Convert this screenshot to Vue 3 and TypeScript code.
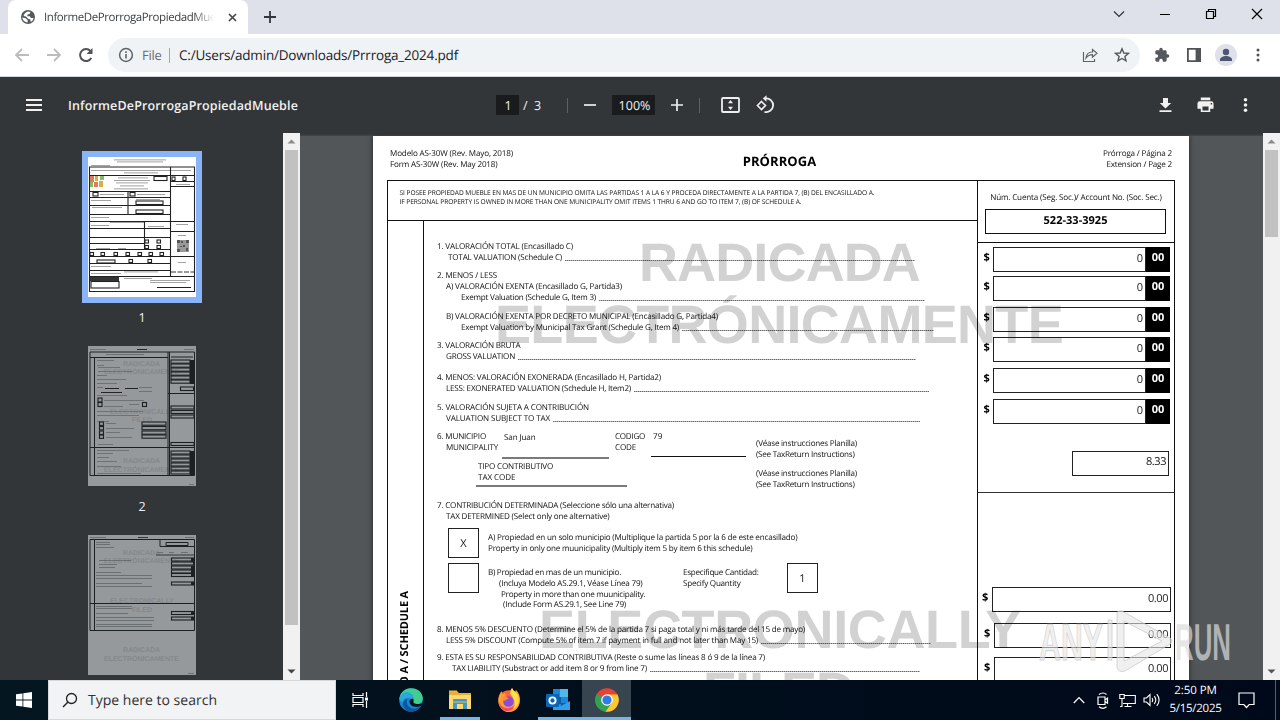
<script setup lang="ts">
interface Line { text: string; indent: number; width: number; leader?: number }
interface Mark { x: number; y: number; w: number; h?: number }

// Adjusts letter spacing so that a run of text fills the given width.
const vFit = {
  mounted(el: HTMLElement, binding: { value: number }) {
    const count = (el.textContent ?? '').trim().length
    const natural = el.getBoundingClientRect().width
    if (count > 0 && binding.value > 0) {
      el.style.letterSpacing = `${((binding.value - natural) / count).toFixed(3)}px`
    }
  },
}

const groups: { id: string; lines: Line[] }[] = [
  { id: 'i1', lines: [
    { text: '1. VALORACIÓN TOTAL (Encasillado C)', indent: 0, width: 136 },
    { text: 'TOTAL VALUATION (Schedule C)', indent: 11, width: 114, leader: 478 }] },
  { id: 'i2', lines: [
    { text: '2. MENOS / LESS', indent: 0, width: 60 },
    { text: 'A) VALORACIÓN EXENTA (Encasillado G, Partida3)', indent: 9, width: 176 },
    { text: 'Exempt Valuation (Schedule G, Item 3)', indent: 24, width: 135, leader: 488 }] },
  { id: 'i2b', lines: [
    { text: 'B) VALORACIÓN EXENTA POR DECRETO MUNICIPAL (Encasillado G, Partida4)', indent: 9, width: 272 },
    { text: 'Exempt Valuation by Municipal Tax Grant (Schedule G, Item 4)', indent: 24, width: 218, leader: 497 }] },
  { id: 'i3', lines: [
    { text: '3. VALORACIÓN BRUTA', indent: 0, width: 83.5 },
    { text: 'GROSS VALUATION', indent: 9, width: 69, leader: 479 }] },
  { id: 'i4', lines: [
    { text: '4. MENOS: VALORACIÓN EXONERADA (Encasillado H, Partida2)', indent: 0, width: 224 },
    { text: 'LESS: EXONERATED VALUATION (Schedule H, Item2)', indent: 9, width: 185, leader: 492 }] },
  { id: 'i5', lines: [
    { text: '5. VALORACIÓN SUJETA A CONTRIBUCIÓN', indent: 0, width: 152 },
    { text: 'VALUATION SUBJECT TO TAX', indent: 9, width: 104, leader: 483 }] },
]

const tail: { id: string; lines: Line[] }[] = [
  { id: 'i8', lines: [
    { text: '8. MENOS 5% DESCUENTO (Determine el 5% de la partida 7 si paga total y ni más tarde del 15 de mayo)', indent: 0, width: 368 },
    { text: 'LESS 5% DISCOUNT (Compute 5% of item 7 if payment in full and not later than May 15)', indent: 9, width: 312, leader: 494 }] },
  { id: 'i9', lines: [
    { text: '9. ESTA ES SU RESPONSABILIDAD CONTRIBUTIVA (Reste o sume las líneas 8 ó 9 de la línea 7)', indent: 0, width: 328 },
    { text: 'TAX LIABILITY (Substract or add item 8 or 9 from line 7)', indent: 15, width: 195, leader: 483 }] },
]

const amounts = ['0', '0', '0', '0', '0', '0']
const totals = ['0.00', '0.00', '0.00']

const p1Rules: Mark[] = [
  { x: 2, y: 18, w: 104 }, { x: 2, y: 34, w: 80 }, { x: 2, y: 40, w: 80 }, { x: 2, y: 48, w: 80 },
  { x: 2, y: 57, w: 80 }, { x: 2, y: 64, w: 104 }, { x: 2, y: 71, w: 80 }, { x: 2, y: 80, w: 80 },
  { x: 2, y: 86, w: 54 }, { x: 2, y: 92, w: 80 }, { x: 2, y: 99, w: 104 }, { x: 2, y: 106, w: 80 },
  { x: 2, y: 113, w: 80 }, { x: 2, y: 119, w: 104 }, { x: 82, y: 24, w: 24 }, { x: 82, y: 29, w: 24 },
  { x: 82, y: 74, w: 24 }, { x: 69, y: 130, w: 34 },
]
const p1Boxes: Mark[] = [
  { x: 5, y: 35.5, w: 5, h: 3.5 }, { x: 42, y: 35.5, w: 5, h: 3.5 }, { x: 66, y: 19.5, w: 13, h: 4 },
  { x: 84, y: 20, w: 3, h: 3.5 }, { x: 95, y: 20, w: 3, h: 3.5 }, { x: 48, y: 44, w: 27, h: 3.5 },
  { x: 48, y: 53, w: 27, h: 3.5 }, { x: 57, y: 83, w: 3.5, h: 3 }, { x: 69, y: 83, w: 3.5, h: 3 },
  { x: 57, y: 88.5, w: 3.5, h: 3 }, { x: 69, y: 88.5, w: 3.5, h: 3 }, { x: 2, y: 95.5, w: 3.5, h: 3 },
  { x: 13, y: 95.5, w: 3.5, h: 3 }, { x: 26, y: 95.5, w: 3.5, h: 3 }, { x: 38, y: 95.5, w: 3.5, h: 3 },
  { x: 50, y: 95.5, w: 3.5, h: 3 }, { x: 61, y: 95.5, w: 3.5, h: 3 }, { x: 72, y: 95.5, w: 3.5, h: 3 },
  { x: 9, y: 103, w: 18, h: 3 }, { x: 41, y: 102.5, w: 3.5, h: 3 }, { x: 60, y: 102.5, w: 3.5, h: 3 },
  { x: 3, y: 124.5, w: 28, h: 6.5 },
]
const p1Faint: Mark[] = [
  { x: 26, y: 2.5, w: 52 }, { x: 29, y: 4.5, w: 46 }, { x: 3, y: 8, w: 19 },
  { x: 3, y: 13, w: 100 }, { x: 36, y: 15.5, w: 34 },
  { x: 30, y: 20.5, w: 30 }, { x: 26, y: 23, w: 36 }, { x: 28, y: 25.5, w: 32 }, { x: 32, y: 28.5, w: 24 },
  { x: 26, y: 31.5, w: 34 }, { x: 12, y: 37, w: 24 }, { x: 49, y: 37, w: 28 }, { x: 3, y: 43, w: 20 },
  { x: 4, y: 50, w: 30 }, { x: 48, y: 42, w: 24 }, { x: 3, y: 60, w: 18 }, { x: 22, y: 65, w: 34 },
  { x: 3, y: 68, w: 18 }, { x: 60, y: 69, w: 16 }, { x: 88, y: 27, w: 14 }, { x: 88, y: 67, w: 12 },
  { x: 90, y: 78, w: 8 }, { x: 8, y: 91, w: 14 }, { x: 30, y: 91, w: 8 }, { x: 36, y: 114.5, w: 34 },
  { x: 62, y: 123, w: 40 }, { x: 62, y: 125, w: 36 }, { x: 90, y: 105, w: 8 }, { x: 3, y: 109, w: 20 },
  { x: 3, y: 116, w: 30 }, { x: 36, y: 121, w: 28 },
]
const p2Faint: Mark[] = [
  { x: 2, y: 3, w: 16 }, { x: 96, y: 3, w: 10 }, { x: 18, y: 8, w: 38 }, { x: 9, y: 14, w: 17 }, { x: 9, y: 19, w: 7 },
  { x: 10, y: 21, w: 22 }, { x: 10, y: 25, w: 34 }, { x: 9, y: 29, w: 10 }, { x: 9, y: 33, w: 29 }, { x: 9, y: 37, w: 20 },
  { x: 9, y: 41, w: 6 }, { x: 51, y: 41, w: 13 }, { x: 51, y: 45, w: 13 }, { x: 9, y: 49, w: 30 }, { x: 16, y: 54, w: 40 },
  { x: 16, y: 60, w: 19 }, { x: 41, y: 58, w: 10 }, { x: 9, y: 65, w: 46 }, { x: 9, y: 69, w: 42 }, { x: 9, y: 75, w: 12 },
  { x: 18, y: 77, w: 10 }, { x: 18, y: 82, w: 28 }, { x: 18, y: 86, w: 14 }, { x: 18, y: 91, w: 26 }, { x: 10, y: 98, w: 15 },
  { x: 9, y: 104, w: 32 }, { x: 9, y: 107, w: 16 }, { x: 9, y: 111, w: 12 }, { x: 9, y: 115, w: 20 }, { x: 9, y: 120, w: 24 },
  { x: 9, y: 127, w: 44 }, { x: 101, y: 138, w: 5 },
]
const p2Boxes: Mark[] = [
  ...[14, 18, 22, 26, 30, 34].map((y) => ({ x: 83, y, w: 19, h: 3.2 })),
  { x: 92.5, y: 41, w: 13, h: 3.5 }, { x: 83, y: 60, w: 23, h: 3 }, { x: 83, y: 64.5, w: 23, h: 3 },
  { x: 83, y: 69, w: 23, h: 3 }, { x: 83, y: 96.5, w: 23, h: 3 },
  ...[105, 109, 113, 117, 121, 125].map((y) => ({ x: 83, y, w: 19, h: 3 })),
  ...[76, 80.5, 85, 89].map((y) => ({ x: 54, y, w: 24, h: 3.2 })),
  ...[76, 80.5, 85, 89].map((y) => ({ x: 11.5, y, w: 4, h: 3.4 })),
  { x: 10, y: 52, w: 4, h: 4 }, { x: 10, y: 56.5, w: 4, h: 4 }, { x: 54.5, y: 56.5, w: 4, h: 4 },
]
const p3Faint: Mark[] = [
  { x: 2, y: 2, w: 16 }, { x: 97, y: 2, w: 9 }, { x: 8, y: 7, w: 14 }, { x: 8, y: 9, w: 14 }, { x: 8, y: 12, w: 18 },
  { x: 69, y: 17, w: 6 }, { x: 81, y: 17, w: 5 }, { x: 93, y: 17, w: 7 }, { x: 11, y: 25, w: 32 }, { x: 11, y: 29, w: 18 },
  { x: 11, y: 32, w: 16 }, { x: 8, y: 37, w: 25 }, { x: 8, y: 40, w: 56 }, { x: 8, y: 43, w: 56 }, { x: 8, y: 48, w: 46 },
  { x: 8, y: 51, w: 56 }, { x: 8, y: 71, w: 36 }, { x: 8, y: 73, w: 36 }, { x: 8, y: 78, w: 32 }, { x: 8, y: 82, w: 58 },
  { x: 8, y: 85, w: 58 }, { x: 8, y: 89, w: 56 }, { x: 8, y: 91, w: 56 }, { x: 100, y: 138, w: 6 },
]
const p3Boxes: Mark[] = [23, 27, 31, 35, 38.5, 47, 76.5, 82].map((y) => ({ x: 83.5, y, w: 22, h: 3 }))
</script>

<template>
  <div class="screen">
    <header class="tabs">
      <div class="tab">
        <svg class="globe" viewBox="0 0 14 14"><circle cx="7" cy="7" r="7" fill="#55595e" /><path d="M1.300 7.500 4.500 8.300 6.600 10v2.400C4 12.300 1.600 10.200 1.300 7.500zM7 1.500 9.500 1.900 8.600 4 6.500 4.600 6.300 6.300 8.800 6.200 10 8h2.600c-.4 2-1.400 3.200-2.800 4L9.300 9.500 7 8.700 5 6.500l-2.500-.6C3.200 3.500 5 2 7 1.500z" fill="#fff" /></svg>
        <span class="tab-title"><span v-fit="187">InformeDeProrrogaPropiedadMueble</span></span>
        <svg class="tab-x" viewBox="0 0 9 9"><path d="m1 1 7 7M8 1 1 8" stroke="#45494d" stroke-width="1.700" /></svg>
      </div>
      <svg class="new-tab" viewBox="0 0 12 12"><path d="M6 0v12M0 6h12" stroke="#33373b" stroke-width="1.800" /></svg>
      <div class="window-buttons">
        <svg viewBox="0 0 12 12"><path d="m1 3.500 5 5 5-5" fill="none" stroke="#333" stroke-width="1.200" /></svg>
        <svg viewBox="0 0 12 12"><path d="M1 6.500h10" stroke="#000" /></svg>
        <svg viewBox="0 0 12 12"><path d="M1.500 3.500h7v7h-7zM3.500 3.500v-2h7v7h-2" fill="none" stroke="#000" stroke-width="1.200" /></svg>
        <svg viewBox="0 0 12 12"><path d="m1 1 10 10M11 1 1 11" stroke="#000" stroke-width="1.200" /></svg>
      </div>
    </header>

    <div class="address-row">
      <svg class="nav" viewBox="0 0 16 16"><path d="M15 8H2M8 2 2 8l6 6" fill="none" stroke="#babcbe" stroke-width="1.800" /></svg>
      <svg class="nav" viewBox="0 0 16 16"><path d="M1 8h13M8 2l6 6-6 6" fill="none" stroke="#babcbe" stroke-width="1.800" /></svg>
      <svg class="nav" viewBox="0 0 16 16"><path d="M13.300 11A6 6 0 1 1 12.500 4" fill="none" stroke="#505357" stroke-width="2" /><path d="M14.500 1v6H8.500z" fill="#505357" /></svg>
      <div class="omnibox">
        <svg class="info" viewBox="0 0 16 16"><circle cx="8" cy="8" r="6.400" fill="none" stroke="#5f6368" stroke-width="1.500" /><path d="M8 7v4.500M8 4.300v1.600" stroke="#5f6368" stroke-width="1.600" /></svg>
        <span class="scheme"><span v-fit="19.500">File</span></span>
        <i class="omni-sep"></i>
        <span class="url" v-fit="279">C:/Users/admin/Downloads/Prrroga_2024.pdf</span>
        <svg class="share" viewBox="0 0 16 16"><path d="M1.500 5v9.500h11V12M4 11c.4-4 2.500-6 6.500-6V2.500L15 6.300l-4.500 3.900V7.600C7.800 7.600 5.800 8.500 4 11z" fill="none" stroke="#5f6368" stroke-width="1.200" /></svg>
        <svg class="star" viewBox="0 0 16 16"><path d="m8 1.800 1.800 4.200 4.600.4-3.500 3 1.100 4.500L8 11.500l-4 2.400 1.100-4.500-3.500-3 4.600-.4z" fill="none" stroke="#55595e" stroke-width="1.400" /></svg>
      </div>
      <svg class="puzzle" viewBox="0 0 24 24"><path fill="#55595e" d="M20.500 11H19V7c0-1.100-.9-2-2-2h-4V3.500a2.500 2.500 0 0 0-5 0V5H4c-1.100 0-2 .9-2 2v3.800h1.500a2.700 2.700 0 0 1 0 5.400H2V20c0 1.100.9 2 2 2h3.800v-1.500a2.700 2.700 0 0 1 5.400 0V22H17c1.100 0 2-.9 2-2v-4h1.500a2.500 2.500 0 0 0 0-5z" /></svg>
      <svg class="panel" viewBox="0 0 14 14"><path fill="#505357" fill-rule="evenodd" d="M0 0h14v14H0zM1.800 1.800v10.400h6.800V1.800z" /></svg>
      <svg class="avatar" viewBox="0 0 22 22"><circle cx="11" cy="11" r="11" fill="#dfe0ea" /><circle cx="11" cy="8" r="3.200" fill="#4d5570" /><path d="M5 17v-1.500c0-2.300 3.500-3.500 6-3.500s6 1.200 6 3.500V17z" fill="#4d5570" /></svg>
      <svg class="dots" viewBox="0 0 4 14"><g fill="#505357"><circle cx="2" cy="2" r="1.500" /><circle cx="2" cy="7" r="1.500" /><circle cx="2" cy="12" r="1.500" /></g></svg>
    </div>

    <div class="pdf-bar">
      <svg class="burger" viewBox="0 0 16 12"><path d="M0 1h16M0 6h16M0 11h16" stroke="#f1f1f1" stroke-width="2" /></svg>
      <span class="doc-title"><span v-fit="230">InformeDeProrrogaPropiedadMueble</span></span>
      <span class="page-now">1</span>
      <span class="page-all">/&nbsp; 3</span>
      <i class="bar-sep"></i>
      <svg class="zoom-btn" viewBox="0 0 12 12"><path d="M0 6h12" stroke="#eee" stroke-width="1.700" /></svg>
      <span class="zoom-value"><span v-fit="32">100%</span></span>
      <svg class="zoom-btn" viewBox="0 0 12 12"><path d="M0 6h12M6 0v12" stroke="#eee" stroke-width="1.700" /></svg>
      <i class="bar-sep second"></i>
      <svg class="fit-btn" viewBox="0 0 19 16"><rect x="1" y="1" width="17" height="14" rx="1" fill="none" stroke="#eee" stroke-width="1.800" /><path d="M9.500 3 12 6.300H7zM9.500 13 12 9.700H7z" fill="#eee" /></svg>
      <svg class="rotate-btn" viewBox="0 0 18 18"><path d="M5.500 5.500 9.500 9.500l-4 4-4-4z" fill="none" stroke="#eee" stroke-width="1.600" /><path d="M9.500 2.500a6.800 6.800 0 1 1-1 13.300" fill="none" stroke="#eee" stroke-width="1.800" /><path d="M10.500-.8v6.600L6.800 2.500z" fill="#eee" /></svg>
      <div class="pdf-actions">
        <svg viewBox="0 0 16 16"><path d="M5.500 1h5v5h3.200L8 11.500 2.300 6h3.200zM2 13.200h12V15H2z" fill="#f1f1f1" /></svg>
        <svg viewBox="0 0 18 16"><path fill="#f1f1f1" fill-rule="evenodd" d="M4 0h10v3H4zM3 4h12a2.500 2.500 0 0 1 2.500 2.500V12H14v3.500H4V12H.5V6.500A2.500 2.500 0 0 1 3 4zm2.800 5.500v4.300h6.400V9.500zM14.500 6v1.500H16V6z" /></svg>
        <svg viewBox="0 0 16 16"><g fill="#f1f1f1"><circle cx="8" cy="2.800" r="1.800" /><circle cx="8" cy="8" r="1.800" /><circle cx="8" cy="13.200" r="1.800" /></g></svg>
      </div>
    </div>

    <main class="viewer">
      <aside class="thumbs">
        <div class="thumb selected">
          <svg viewBox="0 0 108 140">
            <rect width="108" height="140" fill="#fff" />
            <g fill="#8c8c8c"><rect v-for="(m, i) in p1Faint" :key="i" :x="m.x" :y="m.y" :width="m.w" height=".8" /></g>
            <g fill="#222"><rect v-for="(m, i) in p1Rules" :key="i" :x="m.x" :y="m.y" :width="m.w" height="1" /></g>
            <g fill="#fff" stroke="#222" stroke-width="1.100"><rect v-for="(m, i) in p1Boxes" :key="i" :x="m.x" :y="m.y" :width="m.w" :height="m.h" /></g>
            <path d="M1.500 10h105v124.500H1.500zM82.500 10v109.500M40 34v23M56.500 64v28" fill="none" stroke="#222" stroke-width="1.100" />
            <path d="M2 19h4v6H2zM6 25h4v5H6z" fill="#dc7d54" /><path d="M7 19h3v5H7zM11 24h4v6h-4z" fill="#d9ad46" /><path d="M2 25h3v5H2zM12 19h4v4h-4z" fill="#86ba68" />
            <rect x="2" y="120" width="29" height="4" fill="#333" />
            <rect x="89" y="83" width="12" height="12" fill="#999" /><path d="M89 83h3v3h-3zM98 83h3v3h-3zM89 92h3v3h-3zM95 88h2v2h-2zM98 91h2v3h-2zM93 84h2v2h-2zM92 89h2v1h-2z" fill="#555" />
            <path d="M83 115h23" stroke="#333" stroke-dasharray="5 1.500" />
          </svg>
        </div>
        <span class="thumb-no">1</span>
        <div class="thumb">
          <svg viewBox="0 0 108 140">
            <rect width="108" height="140" fill="#96999c" />
            <g class="thumb-mark">
              <text x="35" y="19.500" textLength="37">RADICADA</text><text x="16" y="27.500" textLength="75">ELECTRÓNICAMENTE</text>
              <text x="22" y="68" textLength="64">ELECTRONICALLY</text><text x="44" y="76" textLength="20">FILED</text>
              <text x="35" y="117" textLength="37">RADICADA</text><text x="16" y="126" textLength="75">ELECTRÓNICAMENTE</text>
            </g>
            <g fill="#64686b"><rect v-for="(m, i) in p2Faint" :key="i" :x="m.x" :y="m.y" :width="m.w" height=".8" /></g>
            <path d="M49 3.500h10M17 42.500h14M37 42.500h13M13 46.500h21" stroke="#222" />
            <path d="M2 6h104.500v123.500H2zM2 11.500h78M6.500 11.500v118M80 6v123.500M81.500 6v123.500M80 47.500h26.500M2 101.500h104.500M83 11h22" fill="none" stroke="#1d2023" />
            <g fill="none" stroke="#1d2023" stroke-width="1.100"><rect v-for="(m, i) in p2Boxes" :key="i" :x="m.x" :y="m.y" :width="m.w" :height="m.h" /></g>
            <path d="M102 14h4v24h-4zM102 105h4v24h-4z" fill="#1d2023" />
          </svg>
        </div>
        <span class="thumb-no">2</span>
        <div class="thumb">
          <svg viewBox="0 0 108 140">
            <rect width="108" height="140" fill="#96999c" />
            <g class="thumb-mark">
              <text x="35" y="19.500" textLength="37">RADICADA</text><text x="16" y="27.500" textLength="75">ELECTRÓNICAMENTE</text>
              <text x="22" y="68" textLength="64">ELECTRONICALLY</text><text x="44" y="77" textLength="20">FILED</text>
              <text x="35" y="117" textLength="37">RADICADA</text><text x="16" y="126" textLength="75">ELECTRÓNICAMENTE</text>
            </g>
            <g fill="#606467"><rect v-for="(m, i) in p3Faint" :key="i" :x="m.x" :y="m.y" :width="m.w" height=".8" /></g>
            <path d="M50 2.500h10M68 20h38" stroke="#33373a" />
            <path d="M2 4.500h104.500v91H2zM6.500 4.500v91M2 68.500h104.500M72 4.500v7h34M78 7.500h22v3H78z" fill="none" stroke="#1d2023" />
            <g fill="none" stroke="#1d2023" stroke-width="1.100"><rect v-for="(m, i) in p3Boxes" :key="i" :x="m.x" :y="m.y" :width="m.w" :height="m.h" /></g>
            <path d="M103 23h3v4h-3zM103 31h3v11h-3zM103 47h3v3h-3zM103 76.500h3v3h-3zM103 82h3v3h-3z" fill="#1d2023" />
          </svg>
        </div>
      </aside>

      <div class="scrollbar side-scroll">
        <svg viewBox="0 0 17 17"><path d="M4.500 10.500 8.500 6.500l4 4z" fill="#8b8b8b" /></svg>
        <i class="grip"></i>
        <svg class="end" viewBox="0 0 17 17"><path d="M4.500 6.500l4 4 4-4z" fill="#444" /></svg>
      </div>

      <section class="canvas">
        <article class="sheet">
          <div class="sheet-head">
            <div><p><span v-fit="123">Modelo AS-30W (Rev. Mayo, 2018)</span></p><p><span v-fit="107.500">Form AS-30W (Rev. May 2018)</span></p></div>
            <h1><span v-fit="73.500">PRÓRROGA</span></h1>
            <div class="right"><p><span v-fit="69">Prórroga / Página 2</span></p><p><span v-fit="65.500">Extension / Page 2</span></p></div>
          </div>

          <div class="form">
            <div class="form-main">
              <div class="notice">
                <p><span v-fit="475">SI POSEE PROPIEDAD MUEBLE EN MAS DE UN MUNICIPIO OMITA LAS PARTIDAS 1 A LA 6 Y PROCEDA DIRECTAMENTE A LA PARTIDA 7, (B) DEL ENCASILLADO A.</span></p>
                <p><span v-fit="402">IF PERSONAL PROPERTY IS OWNED IN MORE THAN ONE MUNICIPALITY OMIT ITEMS 1 THRU 6 AND GO TO ITEM 7, (B) OF SCHEDULE A.</span></p>
              </div>
              <div class="form-body">
                <div class="spine"><span>ENCASILLADO A / SCHEDULE A</span></div>
                <div class="items">
                  <div v-for="g in groups" :key="g.id">
                    <div v-for="l in g.lines" :key="l.text" class="line" :style="{ paddingLeft: l.indent + 'px', width: (l.leader ?? 520) + 'px' }">
                      <span v-fit="l.width">{{ l.text }}</span><i v-if="l.leader" class="leader"></i>
                    </div>
                  </div>

                  <div class="fields">
                    <div class="f-label"><p><span v-fit="49">6. MUNICIPIO</span></p><p class="sub"><span v-fit="52">MUNICIPALITY</span></p></div>
                    <div class="f-value grey"><span v-fit="31.500">San Juan</span></div>
                    <div class="f-code"><p><span v-fit="30">CODIGO</span></p><p><span v-fit="21">CODE</span></p></div>
                    <div class="f-value number"><span v-fit="9.500">79</span></div>
                    <div class="f-note"><p><span v-fit="101">(Véase instrucciones Planilla)</span></p><p><span v-fit="98.500">(See TaxReturn Instructions)</span></p></div>
                  </div>
                  <div class="fields">
                    <div class="f-tax"><p><span v-fit="75">TIPO CONTRIBUTIVO</span></p><p><span v-fit="37.500">TAX CODE</span></p></div>
                    <div class="f-note lower"><p><span v-fit="101">(Véase instrucciones Planilla)</span></p><p><span v-fit="98.500">(See TaxReturn Instructions)</span></p></div>
                  </div>

                  <div>
                    <p><span v-fit="237">7. CONTRIBUCIÓN DETERMINADA (Seleccione sólo una alternativa)</span></p>
                    <p class="sub"><span v-fit="163.500">TAX DETERMINED (Select only one alternative)</span></p>
                  </div>
                  <div class="choice">
                    <b class="check">X</b>
                    <div class="choice-text">
                      <p><span v-fit="309.500">A) Propiedad en un solo municipio (Multiplique la partida 5 por la 6 de este encasillado)</span></p>
                      <p><span v-fit="264.500">Property in only one muunicipality (Multiply item 5 by item 6 this schedule)</span></p>
                    </div>
                  </div>
                  <div class="choice">
                    <b class="check"></b>
                    <div class="choice-text second">
                      <p><span v-fit="133">B) Propiedad en mas de un municipio.</span></p>
                      <p class="s1"><span v-fit="143.500">(Incluya Modelo AS.29.1, Véase Línea 79)</span></p>
                      <p class="s2"><span v-fit="144.500">Property in more than one muunicipality.</span></p>
                      <p class="s3"><span v-fit="123">(Include Form AS.29.1, See Line 79)</span></p>
                    </div>
                    <div class="quantity"><p><span v-fit="75.500">Especifique Cantidad:</span></p><p><span v-fit="57.500">Specify Quantity</span></p></div>
                    <b class="check">1</b>
                  </div>

                  <div v-for="g in tail" :key="g.id">
                    <div v-for="l in g.lines" :key="l.text" class="line" :style="{ paddingLeft: l.indent + 'px', width: (l.leader ?? 520) + 'px' }">
                      <span v-fit="l.width">{{ l.text }}</span><i v-if="l.leader" class="leader"></i>
                    </div>
                  </div>
                </div>
              </div>
            </div>

            <div class="form-side">
              <div class="account">
                <p><span v-fit="171.500">Núm. Cuenta (Seg. Soc.)/ Account No. (Soc. Sec.)</span></p>
                <div class="account-no"><span v-fit="64">522-33-3925</span></div>
              </div>
              <div class="amounts">
                <div v-for="(a, i) in amounts" :key="i" class="amount"><b>$</b><span class="amount-box">{{ a }}</span><span class="cents">00</span></div>
                <div class="rate"><span v-fit="20">8.33</span></div>
              </div>
              <div class="totals">
                <div v-for="(t, i) in totals" :key="i" class="total"><b>$</b><span class="total-box"><span v-fit="20">{{ t }}</span></span></div>
              </div>
            </div>
          </div>

          <div class="stamp w1"><span v-fit="281">RADICADA</span></div>
          <div class="stamp w2"><span v-fit="568">ELECTRÓNICAMENTE</span></div>
          <div class="stamp w3"><span v-fit="482">ELECTRONICALLY</span></div>
          <div class="stamp w4"><span v-fit="151">FILED</span></div>
        </article>
      </section>

      <div class="scrollbar main-scroll">
        <svg viewBox="0 0 17 17"><path d="M4.500 10.500 8.500 6.500l4 4z" fill="#8b8b8b" /></svg>
        <i class="grip"></i>
        <svg class="end" viewBox="0 0 17 17"><path d="M4.500 6.500l4 4 4-4z" fill="#555" /></svg>
      </div>

      <svg class="brand" viewBox="0 0 196 64">
        <g fill="#e6e6e6" fill-opacity=".6" stroke="#c4c4c4" stroke-opacity=".7" stroke-width="1">
          <text x="2" y="51" textLength="64" lengthAdjust="spacingAndGlyphs">ANY</text>
          <path d="M71 11h4v40h-4zM80 5q0-4 5-3l48 27q4 3 0 6L88 62q-7 2-8-4zM87 12v40l38-20z" fill-rule="evenodd" />
        </g>
        <g fill="#dcdcdc" fill-opacity=".7"><text x="138" y="51" textLength="56" lengthAdjust="spacingAndGlyphs">RUN</text></g>
      </svg>
    </main>

    <footer class="taskbar">
      <div class="start"><svg viewBox="0 0 16 16"><path d="M0 2.300 6.500 1.400v6.100H0zM7.300 1.300 16 0v7.500H7.300zM0 8.400h6.500v6.200L0 13.700zM7.300 8.400H16V16l-8.700-1.300z" fill="#fff" /></svg></div>
      <div class="search">
        <svg viewBox="0 0 16 16"><circle cx="9.500" cy="6.500" r="5" fill="none" stroke="#222" stroke-width="1.300" /><path d="M6 10 1 15" stroke="#222" stroke-width="1.400" /></svg>
        <span v-fit="129">Type here to search</span>
      </div>
      <div class="app"><svg class="view" viewBox="0 0 17 16"><path d="M1 1v2.500h10V1M1 15v-2.500h10V15M1 5.500h10v5H1zM14.500 0v5M14.500 9v7" fill="none" stroke="#fff" stroke-width="1.200" /><path d="M13 5.500h3v3h-3z" fill="#fff" /></svg></div>
      <div class="app edge">
        <svg viewBox="0 0 24 24">
          <circle cx="12" cy="12" r="11.800" fill="#1686d0" />
          <path d="M.5 11C1 4.500 6 .2 12 .2c7 0 11.800 5 11.800 9.800 0 4-3 6-6 6-2.500 0-3.700-1-3.500-2 1.200-1 1.300-5-3.300-5.500C6 8 1.500 10 .5 11z" fill="#42ce91" />
          <path d="M.4 11C1.500 6 6 3 10.500 4.500c4 1.500 5 5.500 3.500 8.500-2-5-9-4-10.500 1-1.300 0-2.500-1-3.100-3z" fill="#28a9d8" />
          <path d="M8.500 11c-2 3 0 8.500 5 9.500 3 .6 6-.8 8.500-2.500-2.500 4.500-8 6.500-13 5.300C4.500 21.500 3 16.500 5 13c1-1.500 2.500-2.200 3.500-2z" fill="#10559f" />
          <path d="M10.500 13.500c0 4 4.500 6 8.500 5.300 2-.3 3.500-1.300 4-1.300.5-.5.700-1.800.8-3-1.500 1.200-3.500 1.800-5.800 1.500-2.500-.2-4-1.200-3.700-2.300.6-1.200.2-2.600-1-3.200-1.500.3-2.800 1.500-2.800 3z" fill="#051722" />
        </svg>
      </div>
      <div class="app open">
        <svg class="folder" viewBox="0 0 22 20"><path d="M0 1h8l2 2h12v16H0z" fill="#e9ae33" /><path d="M0 5h22v14H0z" fill="#ffd870" /><path d="M4 10q0-1 1-1h12q1 0 1 1v9h-4v-5H8v5H4z" fill="#4096ce" /><path d="M4 12h14M0 1h8" stroke="#f1bd42" /></svg>
      </div>
      <div class="app">
        <svg viewBox="0 0 24 24">
          <circle cx="12" cy="13" r="10.800" fill="#ff633b" />
          <path d="M1.500 13C1 9 2.500 6 4.500 3l1 3.500L8 5l1 4 6 1-2-7 2-3c1 2 2 3 3 4l1-2c4 4 4.500 9 3.500 13-1.500 6-6 9-11 9C6 24 2 19 1.500 13z" fill="#ffa02e" />
          <path d="M15 0c1 3 4 4 6 7 2 6 0 12-5 14 4-6 1-12-3-15z" fill="#ffe14a" />
          <circle cx="11.500" cy="13.500" r="5.300" fill="#8d4bdc" /><path d="M5 9c3-1 5 0 7 1.500-2 .5-3 2-5.500 2.500z" fill="#ff8a31" />
          <path d="M2 14c1 3 3 5 6 5.800 3.500 1 7.500-.3 9.500-2.800-1 4.500-5 7-9.500 5.800C4 21 2 18 2 14z" fill="#f72f67" opacity=".8" />
        </svg>
      </div>
      <div class="app open mail">
        <svg viewBox="0 0 24 24"><path d="M7 1h15v20H7z" fill="#2087d5" /><path d="M14 1h8v8h-8z" fill="#50b8ec" /><path d="M8 9h7v7H8zM15 15h7v6h-7z" fill="#0d5bac" /><path d="M7 14l8 4 9-5v9H7z" fill="#31a0e8" /><rect y="6" width="13" height="13" rx="1" fill="#0965b5" /><circle cx="6.500" cy="12.500" r="3.100" fill="none" stroke="#fff" stroke-width="1.900" /></svg>
      </div>
      <div class="app open active">
        <svg viewBox="0 0 24 24"><circle cx="12" cy="12" r="11.800" fill="#e84235" /><path d="M12 12 1.800 6a11.800 11.800 0 0 0 8.700 17.700L17 14z" fill="#2da44f" /><path d="M12 6.500h10.400a11.800 11.800 0 0 1-11.900 17.200L17 14.500z" fill="#fcc934" /><circle cx="12" cy="12" r="5.800" fill="#fff" /><circle cx="12" cy="12" r="4.600" fill="#327be6" /></svg>
      </div>
      <div class="tray">
        <svg class="caret" viewBox="0 0 12 8"><path d="m.8 7 5.200-5.500L11.200 7" fill="none" stroke="#fff" stroke-width="1.200" /></svg>
        <svg class="meet" viewBox="0 0 12 17"><path d="M1 5h7v7.500H1zM8 8l2.500-1.800v5L8 9.500M2 2.500q4-3 7.500 0M2 14.800q4 3 7.500 0" fill="none" stroke="#fff" stroke-width="1.200" /></svg>
        <svg class="net" viewBox="0 0 17 15"><path d="M5.500 2.500h10.800v8H4M8.500 10.500v3M5.500 13.500h7M.8 1.500h4.400v4H.8zM3 5.500v8H1" fill="none" stroke="#fff" stroke-width="1.100" /></svg>
        <svg class="vol" viewBox="0 0 18 14"><path d="M1 5h2.500L7 1.500v11L3.500 9H1zM9 5q1.500 2 0 4M11.300 3.200q3 3.800 0 7.600M13.800 1.200q4.600 5.800 0 11.600" fill="none" stroke="#fff" stroke-width="1.100" /></svg>
        <div class="clock"><span v-fit="42.500">2:50 PM</span><span v-fit="52">5/15/2025</span></div>
        <svg class="note" viewBox="0 0 17 17"><path d="M1 1h15v11.500h-4.800L8.500 15.500l-2.700-3H1z" fill="none" stroke="#fff" stroke-width="1.200" /></svg>
        <i class="desk"></i>
      </div>
    </footer>
  </div>
</template>

<style>
html, body { margin: 0; overflow: hidden; }
</style>

<style scoped>
.screen { width: 1280px; height: 720px; display: flex; flex-direction: column; overflow: hidden; font-family: "Open Sans", "Noto Sans", sans-serif; text-rendering: geometricPrecision; }
.screen * { box-sizing: border-box; }
.screen span { white-space: nowrap; }
svg { display: block; flex: none; }
p { margin: 0; }
p > span, .stamp > span { display: inline-block; }

.tabs { flex: 0 0 34px; display: flex; align-items: center; background: #dee1e9; padding-left: 8px; }
.tab { width: 240px; height: 34px; display: flex; align-items: center; background: #fff; border-radius: 8px 8px 0 0; padding-left: 13px; }
.globe { width: 14px; height: 14px; margin-right: 9px; }
.tab-title { width: 170px; overflow: hidden; color: #404347; font-size: 11.5px; mask-image: linear-gradient(90deg, #000 150px, transparent 170px); }
.tab-title > span, .scheme > span, .doc-title > span, .zoom-value > span { display: inline-block; }
.tab-x { width: 9px; height: 9px; margin-left: 14px; }
.new-tab { width: 12px; height: 12px; margin-left: 16px; }
.window-buttons { margin-left: auto; display: flex; gap: 34px; padding: 0 17px 6px 0; }
.window-buttons svg { width: 12px; height: 12px; }

.address-row { flex: 0 0 43px; display: flex; align-items: center; background: #fff; border-bottom: 1px solid #d3d7da; padding-left: 14px; }
.nav { width: 16px; height: 16px; margin-right: 16px; }
.omnibox { width: 1032px; height: 34px; margin-left: -2px; border-radius: 17px; background: #f0f3f6; display: flex; align-items: center; padding-left: 10px; }
.info { width: 16px; height: 16px; margin-right: 8px; }
.scheme { font-size: 13px; color: #686c70; width: 27px; }
.omni-sep { width: 1px; height: 15px; background: #a5a8ab; margin-right: 9px; }
.url { font-size: 13.5px; color: #202124; }
.share { width: 16px; height: 16px; margin-left: auto; margin-right: 16px; }
.star { width: 16px; height: 16px; margin-right: 10px; }
.puzzle { width: 16px; height: 16px; margin-left: 14px; }
.panel { width: 14px; height: 14px; margin-left: 17px; }
.avatar { width: 22px; height: 22px; margin-left: 14px; }
.dots { width: 4px; height: 14px; margin-left: 19px; }

.pdf-bar { flex: 0 0 56px; display: flex; align-items: center; background: #323639; color: #f1f1f1; padding-left: 26px; }
.burger { width: 16px; height: 12px; margin-right: 26px; }
.doc-title { width: 428px; font-size: 12.5px; font-weight: 600; }
.page-now { width: 23px; height: 20px; background: #191b1c; font-size: 12.5px; line-height: 21px; text-align: center; padding-left: 1px; }
.page-all { font-size: 12.5px; width: 48px; padding: 1px 0 0 4px; }
.bar-sep { width: 1px; height: 15px; background: #5d6163; margin-right: 16px; }
.zoom-btn { width: 12px; height: 12px; }
.zoom-value { width: 43px; height: 20px; margin: 0 16px; background: #191b1c; font-size: 12.5px; line-height: 21px; text-align: center; padding-left: 2px; }
.bar-sep.second { margin: 0 21px 0 16px; }
.fit-btn { width: 19px; height: 16px; }
.rotate-btn { width: 18px; height: 18px; margin-left: 16px; overflow: visible; }
.pdf-actions { margin-left: auto; display: flex; align-items: center; padding-right: 26px; gap: 23px; }
.pdf-actions svg { width: 17px; height: 16px; }

.viewer { position: relative; flex: 0 0 547px; display: flex; background: #525659; overflow: hidden; }
.viewer::before { content: ""; position: absolute; z-index: 2; inset: 0 17px auto 300px; height: 3px; background: linear-gradient(#26292b, #3f4245); opacity: .8; }
.thumbs { width: 283px; flex: none; background: #323639; display: flex; flex-direction: column; align-items: center; padding: 24px 0 0 1px; overflow: hidden; }
.thumb { width: 108px; height: 140px; flex: none; }
.thumb.selected { box-shadow: 0 0 0 6px #8ab4f8; }
.thumb-mark { fill: #85888b; font: bold 7px "Liberation Sans", sans-serif; }
.thumb-no { height: 49px; line-height: 41px; font-size: 12.5px; color: #f1f1f1; }
.scrollbar { width: 17px; flex: none; background: #f1f1f1; display: flex; flex-direction: column; align-items: center; }
.scrollbar svg { width: 17px; height: 17px; }
.scrollbar .end { margin-top: auto; }
.grip { width: 13px; background: #c1c1c1; }
.side-scroll .grip { height: 475px; }
.main-scroll .grip { height: 87px; }

.canvas { flex: 1; padding: 3px 0 0 73px; overflow: hidden; }
.sheet { position: relative; width: 816px; height: 1056px; background: #fff; box-shadow: 0 0 5px rgba(0,0,0,.6); color: #101010; font-size: 8.1px; line-height: 10.800px; padding-left: 14px; isolation: isolate; }
.sheet-head { height: 44px; display: grid; grid-template-columns: 284px 1fr 284px; padding: 13px 17px 0 3px; align-items: start; }
.sheet-head h1 { margin: 4px 3px 0 0; text-align: center; font-size: 13px; line-height: 16px; color: #000; }
.sheet-head h1 span { display: inline-block; }
.right { text-align: right; }
.form { width: 788px; height: 1000px; border: 1px solid #111; display: flex; }
.form-main { width: 589px; flex: none; }
.notice { height: 40px; border-bottom: 1px solid #111; font-size: 6.600px; line-height: 9px; padding: 7px 0 0 11.500px; }
.form-body { display: flex; height: 960px; }
.spine { width: 36px; border-right: 1px solid #111; }
.spine span { display: block; writing-mode: vertical-rl; transform: rotate(180deg); height: 160px; margin-top: 369.500px; width: 35px; line-height: 34px; text-align: right; font-size: 11px; font-weight: bold; color: #000; letter-spacing: -.15px; }
.items { padding: 21px 0 0 13px; display: grid; grid-template-rows: 29px 41px 29px 32px 30px 29px 30px 39px 27px 35px 62px 28px 40px; width: 553px; }
.items > div { min-height: 0; }
.line { display: flex; }
.leader { flex: 1; height: 1px; margin: 7px 0 0 3px; background: repeating-linear-gradient(90deg, #666 0 1px, #b5b5b5 1px 2px); }
.sub { padding-left: 9px; }
.fields { display: flex; align-items: flex-start; }
.f-label { width: 65px; }
.f-value { width: 107px; height: 27px; padding: 1px 0 0 2px; }
.f-value span { display: inline-block; }
.f-value.grey { border-bottom: 2px solid #7a7a7a; }
.f-code { width: 36px; margin-left: 6px; }
.f-value.number { width: 95px; height: 25px; padding-top: 0; border-bottom: 1px solid #111; }
.f-note { margin: 7px 0 0 10px; }
.f-tax { width: 151px; height: 25px; margin-left: 39px; padding-left: 2px; border-bottom: 2px solid #7a7a7a; }
.f-note.lower { margin-left: 129px; }
.choice { display: flex; align-items: flex-start; padding-left: 11px; }
.check { width: 31px; height: 30px; border: 1px solid #222; display: flex; align-items: center; justify-content: center; font-size: 11px; line-height: 16px; font-weight: normal; color: #222; padding-top: 1px; }
.choice-text { padding: 5px 0 0 9px; }
.choice-text.second { width: 204px; }
.s1 { padding-left: 11px; }
.s2 { padding-left: 13px; }
.s3 { padding-left: 15px; }
.quantity { width: 104px; padding-top: 5px; }

.form-side { flex: 1; border-left: 1px solid #111; }
.account { height: 62px; border-bottom: 1px solid #111; padding-top: 11.600px; text-align: center; }
.account-no { width: 181px; height: 25px; margin: 5.600px 0 0 7px; border: 1px solid #111; font-size: 11px; line-height: 22px; font-weight: bold; color: #000; }
.account-no span { display: inline-block; }
.amounts { height: 250px; border-bottom: 1px solid #333; display: grid; grid-template-rows: 29px 31px 30px 31px 31px 52px 25px; padding-top: 4px; }
.amount, .total { display: flex; font-size: 11px; line-height: 21px; color: #222; }
.amount b, .total b { width: 15px; padding-left: 5.500px; color: #000; line-height: 22px; }
.amount-box { width: 153px; height: 25px; border: 1px solid #222; text-align: right; padding-right: 2px; }
.cents { width: 24px; height: 25px; background: #000; color: #fff; font-weight: bold; text-align: center; line-height: 22px; }
.rate { width: 97px; height: 25px; border: 1px solid #222; margin-left: 94px; font-size: 11px; line-height: 20px; text-align: right; padding-right: 2px; }
.rate span { display: inline-block; }
.totals { display: grid; grid-template-rows: 36px 34px 30px; padding-top: 94px; }
.total b { width: 16px; padding-left: 6px; }
.total-box { width: 177px; height: 25px; border: 1px solid #222; text-align: right; padding-right: 2px; line-height: 22px; }
.total-box span { display: inline-block; }
.total:first-child b { width: 14px; padding-left: 4px; }
.total:first-child .total-box { width: 179px; }

.stamp { position: absolute; font: bold 54px/60px "Liberation Sans", Arial, sans-serif; color: #d2d2d2; mix-blend-mode: multiply; }
.w1 { left: 266px; top: 97px; }
.w2 { left: 122px; top: 159px; }
.w3 { left: 166px; top: 464px; }
.w4 { left: 330px; top: 526px; }
.brand { position: absolute; left: 1037px; top: 476px; width: 196px; height: 64px; z-index: 3; font: bold 52px "Liberation Sans", sans-serif; }

.taskbar { flex: 0 0 40px; display: flex; background: linear-gradient(90deg, #04161f, #000d1b 60%, #00091a); color: #fff; }
.start { width: 48px; display: flex; align-items: center; justify-content: center; }
.start svg { width: 16px; height: 16px; }
.search { width: 288px; background: #f2f3f4; border: 1px solid #d5d8da; display: flex; align-items: center; padding-left: 13px; gap: 10px; color: #2f3132; font-size: 14px; }
.search svg { width: 16px; height: 16px; }
.search span { display: inline-block; padding-top: 1px; }
.app { width: 49px; display: flex; align-items: center; justify-content: center; position: relative; }
.app svg { width: 24px; height: 24px; }
.app .view { width: 17px; height: 16px; }
.app .folder { width: 22px; height: 20px; }
.app.edge { margin-left: 1px; }
.app.open::after { content: ""; position: absolute; left: 5px; right: 4px; bottom: 0; height: 3px; background: #76b5e4; }
.app.active { background: #36454f; }
.app.active::after { left: 0; right: 0; }
.app.mail::after { right: 0; }
.tray { margin-left: auto; display: flex; align-items: center; }
.caret { width: 12px; height: 8px; margin-right: 12px; }
.meet { width: 12px; height: 17px; margin-right: 10px; }
.net { width: 17px; height: 15px; margin-right: 7px; }
.vol { width: 18px; height: 14px; }
.clock { width: 69px; display: flex; flex-direction: column; align-items: center; font-size: 11.500px; line-height: 18px; }
.note { width: 17px; height: 17px; margin-right: 20px; margin-left: 8px; }
.desk { width: 1px; height: 40px; background: #566069; margin-right: 4px; }
</style>
